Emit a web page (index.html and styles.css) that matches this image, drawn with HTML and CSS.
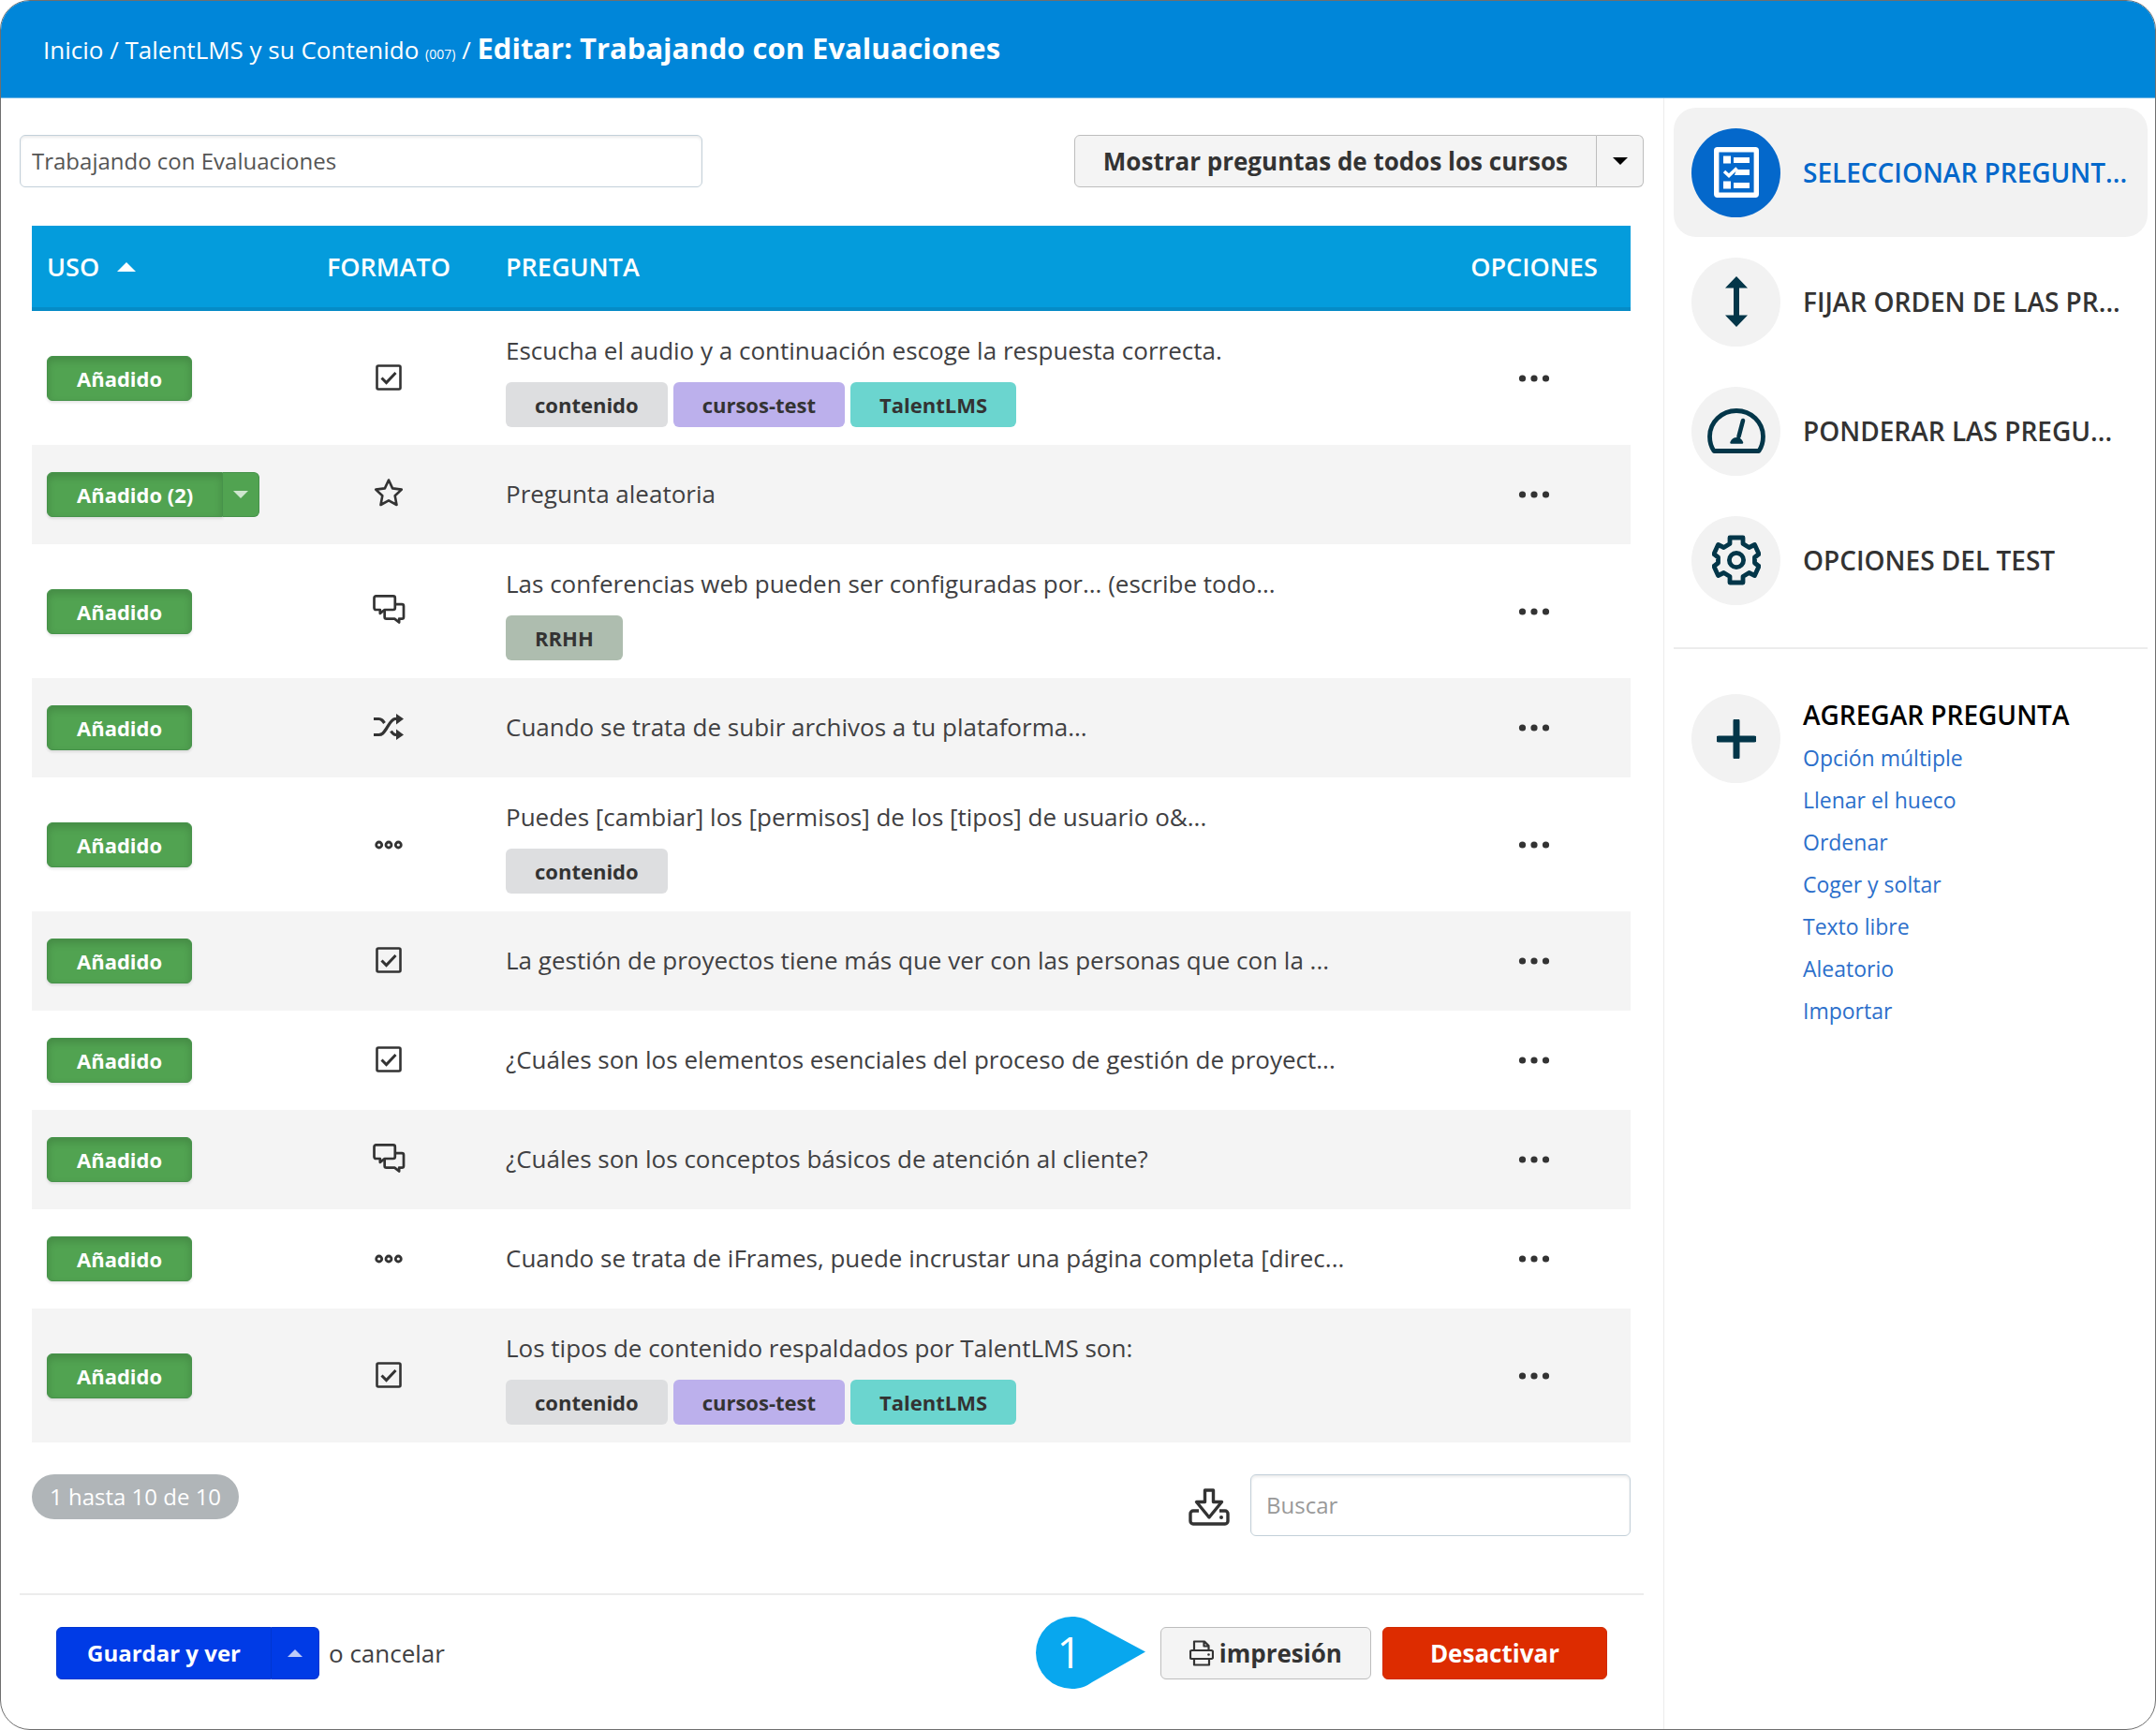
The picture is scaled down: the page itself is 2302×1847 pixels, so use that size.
FILE: index.html
```
<!DOCTYPE html>
<html lang="es">
<head>
<meta charset="utf-8">
<meta name="viewport" content="width=device-width, initial-scale=1">
<title>Editar: Trabajando con Evaluaciones</title>
<link rel="stylesheet" href="styles.css">
</head>
<body>
<svg class="sprite" aria-hidden="true">
  <symbol id="i-check" viewBox="0 0 28 28"><rect x="1.5" y="1.5" width="25" height="25" rx="1.5" fill="none" stroke="currentColor" stroke-width="2.6"/><path d="M6.5 14.5l5 5L21.500 9" fill="none" stroke="currentColor" stroke-width="3"/></symbol>
  <symbol id="i-star" viewBox="0 0 32 32"><path d="M16 2.500l4.100 8.900 9.700 1.200-7.100 6.700 1.800 9.700L16 24.300 7.500 29l1.800-9.700-7.100-6.700 9.700-1.200z" fill="none" stroke="currentColor" stroke-width="2.600" stroke-linejoin="round"/></symbol>
  <symbol id="i-chat" viewBox="0 0 36 32"><path d="M3.500 1.500h19a2 2 0 0 1 2 2v11a2 2 0 0 1-2 2H13l-5 4v-4H3.500a2 2 0 0 1-2-2v-11a2 2 0 0 1 2-2z" fill="none" stroke="currentColor" stroke-width="2.800" stroke-linejoin="round"/><path d="M24.500 10.500H32a2 2 0 0 1 2 2v12a2 2 0 0 1-2 2h-3v4l-5-4h-9a2 2 0 0 1-2-2v-8" fill="none" stroke="currentColor" stroke-width="2.800" stroke-linejoin="round"/></symbol>
  <symbol id="i-shuffle" viewBox="0 0 32 28"><path d="M0 5.500h5.500c3 0 4 1.500 6 4.500M0 22.500h5.500c3.500 0 5-2 8-6.500s5-9.500 9-10.500h3M18.500 18.500c1.500 2.500 3 4 5 4h2" fill="none" stroke="currentColor" stroke-width="3.200"/><path d="M24 0l8 5.500-8 6zM24 16.500l8 6-8 5.500z" fill="currentColor"/></symbol>
  <symbol id="i-gap" viewBox="0 0 30 10"><g fill="none" stroke="currentColor" stroke-width="2.800"><circle cx="4.700" cy="5" r="3"/><circle cx="15" cy="5" r="3"/><circle cx="25.300" cy="5" r="3"/></g></symbol>
  <symbol id="i-dots" viewBox="0 0 34 8"><g fill="currentColor"><circle cx="4.500" cy="4" r="3.600"/><circle cx="17" cy="4" r="3.600"/><circle cx="29.500" cy="4" r="3.600"/></g></symbol>
</svg>

<div class="app">
  <header class="topbar">
    <nav class="crumbs" aria-label="Ruta">
      <a href="#">Inicio</a> / <a href="#">TalentLMS y su Contenido <small>(007)</small></a> / <h1>Editar: Trabajando con Evaluaciones</h1>
    </nav>
  </header>

  <div class="columns">
    <main class="main">
      <div class="toolbar">
        <input class="field name-field" type="text" aria-label="Nombre del test" value="Trabajando con Evaluaciones">
        <div class="split">
          <button class="btn btn-light btn-filter" type="button">Mostrar preguntas de todos los cursos</button>
          <button class="btn btn-light toggle" type="button" aria-label="Más filtros"><span class="caret"></span></button>
        </div>
      </div>

      <div class="grid-wrap">
        <table class="questions">
          <colgroup><col class="c-use"><col class="c-format"><col><col class="c-options"></colgroup>
          <thead>
            <tr><th>USO <span class="caret up sort"></span></th><th class="center">FORMATO</th><th>PREGUNTA</th><th class="center">OPCIONES</th></tr>
          </thead>
          <tbody>
            <tr class="tagged">
              <td><button class="btn-use" type="button">Añadido</button></td>
              <td class="center"><svg class="ic ic-check"><use href="#i-check"/></svg></td>
              <td><p>Escucha el audio y a continuación escoge la respuesta correcta.</p><div class="tags"><span class="tag">contenido</span><span class="tag violet">cursos-test</span><span class="tag teal">TalentLMS</span></div></td>
              <td class="center"><button class="more" type="button" aria-label="Opciones"><svg class="ic-dots"><use href="#i-dots"/></svg></button></td>
            </tr>
            <tr>
              <td><div class="split"><button class="btn-use" type="button">Añadido (2)</button><button class="btn-use toggle" type="button" aria-label="Cantidad"><span class="caret"></span></button></div></td>
              <td class="center"><svg class="ic ic-star"><use href="#i-star"/></svg></td>
              <td><p>Pregunta aleatoria</p></td>
              <td class="center"><button class="more" type="button" aria-label="Opciones"><svg class="ic-dots"><use href="#i-dots"/></svg></button></td>
            </tr>
            <tr class="tagged">
              <td><button class="btn-use" type="button">Añadido</button></td>
              <td class="center"><svg class="ic ic-chat"><use href="#i-chat"/></svg></td>
              <td><p>Las conferencias web pueden ser configuradas por... (escribe todo...</p><div class="tags"><span class="tag sage">RRHH</span></div></td>
              <td class="center"><button class="more" type="button" aria-label="Opciones"><svg class="ic-dots"><use href="#i-dots"/></svg></button></td>
            </tr>
            <tr>
              <td><button class="btn-use" type="button">Añadido</button></td>
              <td class="center"><svg class="ic ic-shuffle"><use href="#i-shuffle"/></svg></td>
              <td><p>Cuando se trata de subir archivos a tu plataforma...</p></td>
              <td class="center"><button class="more" type="button" aria-label="Opciones"><svg class="ic-dots"><use href="#i-dots"/></svg></button></td>
            </tr>
            <tr class="tagged">
              <td><button class="btn-use" type="button">Añadido</button></td>
              <td class="center"><svg class="ic ic-gap"><use href="#i-gap"/></svg></td>
              <td><p>Puedes [cambiar] los [permisos] de los [tipos] de usuario o&amp;...</p><div class="tags"><span class="tag">contenido</span></div></td>
              <td class="center"><button class="more" type="button" aria-label="Opciones"><svg class="ic-dots"><use href="#i-dots"/></svg></button></td>
            </tr>
            <tr>
              <td><button class="btn-use" type="button">Añadido</button></td>
              <td class="center"><svg class="ic ic-check"><use href="#i-check"/></svg></td>
              <td><p>La gestión de proyectos tiene más que ver con las personas que con la ...</p></td>
              <td class="center"><button class="more" type="button" aria-label="Opciones"><svg class="ic-dots"><use href="#i-dots"/></svg></button></td>
            </tr>
            <tr>
              <td><button class="btn-use" type="button">Añadido</button></td>
              <td class="center"><svg class="ic ic-check"><use href="#i-check"/></svg></td>
              <td><p>¿Cuáles son los elementos esenciales del proceso de gestión de proyect...</p></td>
              <td class="center"><button class="more" type="button" aria-label="Opciones"><svg class="ic-dots"><use href="#i-dots"/></svg></button></td>
            </tr>
            <tr>
              <td><button class="btn-use" type="button">Añadido</button></td>
              <td class="center"><svg class="ic ic-chat"><use href="#i-chat"/></svg></td>
              <td><p>¿Cuáles son los conceptos básicos de atención al cliente?</p></td>
              <td class="center"><button class="more" type="button" aria-label="Opciones"><svg class="ic-dots"><use href="#i-dots"/></svg></button></td>
            </tr>
            <tr>
              <td><button class="btn-use" type="button">Añadido</button></td>
              <td class="center"><svg class="ic ic-gap"><use href="#i-gap"/></svg></td>
              <td><p>Cuando se trata de iFrames, puede incrustar una página completa [direc...</p></td>
              <td class="center"><button class="more" type="button" aria-label="Opciones"><svg class="ic-dots"><use href="#i-dots"/></svg></button></td>
            </tr>
            <tr class="tagged">
              <td><button class="btn-use" type="button">Añadido</button></td>
              <td class="center"><svg class="ic ic-check"><use href="#i-check"/></svg></td>
              <td><p>Los tipos de contenido respaldados por TalentLMS son:</p><div class="tags"><span class="tag">contenido</span><span class="tag violet">cursos-test</span><span class="tag teal">TalentLMS</span></div></td>
              <td class="center"><button class="more" type="button" aria-label="Opciones"><svg class="ic-dots"><use href="#i-dots"/></svg></button></td>
            </tr>
          </tbody>
        </table>

        <div class="table-foot">
          <span class="count">1 hasta 10 de 10</span>
          <div class="search">
            <button class="more" type="button" aria-label="Descargar"><svg class="ic-download" viewBox="0 0 44 40"><path d="M11 24H5a3 3 0 0 0-3 3v8a3 3 0 0 0 3 3h34a3 3 0 0 0 3-3v-8a3 3 0 0 0-3-3h-6" fill="none" stroke="currentColor" stroke-width="3.400"/><path d="M17.500 2h9v12.500h9L22 31 8.500 14.500h9z" fill="none" stroke="currentColor" stroke-width="3.400" stroke-linejoin="round"/><circle cx="35" cy="31" r="2" fill="currentColor"/></svg></button>
            <input class="field search-field" type="text" placeholder="Buscar" aria-label="Buscar">
          </div>
        </div>
      </div>

      <footer class="actions">
        <div class="actions-left">
          <div class="split">
            <button class="btn btn-primary" type="submit">Guardar y ver</button>
            <button class="btn btn-primary toggle" type="button" aria-label="Más acciones"><span class="caret up"></span></button>
          </div>
          <span>o <a href="#">cancelar</a></span>
        </div>
        <div class="actions-right">
          <div class="callout"><svg viewBox="0 0 117 77" aria-hidden="true"><path d="M38.500 0C47 0 54 2.500 60 7L117 37.500 60 70C54 74.500 47 77 38.500 77a38.500 38.500 0 0 1 0-77z" fill="#08a7ee"/></svg><span>1</span></div>
          <button class="btn btn-light btn-print" type="button"><svg class="ic-print" viewBox="0 0 26 28"><g fill="none" stroke="currentColor" stroke-width="2.200" stroke-linejoin="round"><path d="M5 11V1.500h11L20.500 6v5M5 20H2.500A1.500 1.500 0 0 1 1 18.500v-6A1.500 1.500 0 0 1 2.500 11h21a1.500 1.500 0 0 1 1.500 1.500v6a1.500 1.500 0 0 1-1.500 1.500H21M5 20h16v6.500H5zM15.500 1.500v5h5"/></g><circle cx="20.500" cy="15.500" r="1.300" fill="currentColor"/></svg>impresión</button>
          <button class="btn btn-danger" type="button">Desactivar</button>
        </div>
      </footer>
    </main>

    <aside class="side">
      <nav class="steps" aria-label="Secciones del test">
        <a class="step active" href="#"><span class="disc"><svg viewBox="0 0 48 54" class="glyph"><rect x="2.700" y="2.700" width="42.600" height="48.600" rx="1" fill="none" stroke="currentColor" stroke-width="5.400"/><path d="M10 9.500h8v8h-8zM21 11h17v6H21zM24 24h14v6H22zM21 38h17v6H21zM10 36.500h8v8h-8z" fill="currentColor"/><path d="M11 26l5 4.500 8.500-8" fill="none" stroke="currentColor" stroke-width="3.500"/></svg></span><span class="label">SELECCIONAR PREGUNT...</span></a>
        <a class="step" href="#"><span class="disc"><svg viewBox="0 0 48 54" class="glyph"><path d="M24 0l12 12.500h-9v29h9L24 54 12 41.500h9v-29h-9z" fill="currentColor"/></svg></span><span class="label">FIJAR ORDEN DE LAS PR...</span></a>
        <a class="step" href="#"><span class="disc"><svg viewBox="0 0 62 48" class="glyph wide"><path d="M7 45.500C4 41 2.500 35 2.500 30a28.500 27.500 0 0 1 57 0c0 5-1.500 11-4.500 15.500z" fill="none" stroke="currentColor" stroke-width="4.800" stroke-linejoin="round"/><path d="M38 13L33.500 30" stroke="currentColor" stroke-width="4.600" stroke-linecap="round"/><path d="M25.500 36.500a6.500 8 0 0 1 11.500 0z" fill="currentColor" stroke="currentColor" stroke-width="2.500" stroke-linejoin="round"/></svg></span><span class="label">PONDERAR LAS PREGU...</span></a>
        <a class="step" href="#"><span class="disc"><svg viewBox="0 0 52 54" class="glyph gear"><g fill="none" stroke="currentColor" stroke-width="4.800" stroke-linejoin="round"><path d="M19 3h14v6.500l6.500 4L45.500 10.500l4.500 10-4.500 3.500v6l4.500 3.500-4.500 10-6-3L33 44.500V51H19v-6.500l-6.500-4-6 3L2 33.500 6.500 30v-6L2 20.500l4.500-10 6 3 6.500-4z"/><circle cx="26" cy="27" r="7.600"/></g></svg></span><span class="label">OPCIONES DEL TEST</span></a>
      </nav>
      <section class="add">
        <span class="disc"><svg viewBox="0 0 42 42" class="glyph plus"><path d="M21 2v38M2 21h38" stroke="currentColor" stroke-width="7" stroke-linecap="round"/></svg></span>
        <div>
          <h2>AGREGAR PREGUNTA</h2>
          <ul>
            <li><a href="#">Opción múltiple</a></li>
            <li><a href="#">Llenar el hueco</a></li>
            <li><a href="#">Ordenar</a></li>
            <li><a href="#">Coger y soltar</a></li>
            <li><a href="#">Texto libre</a></li>
            <li><a href="#">Aleatorio</a></li>
            <li><a href="#">Importar</a></li>
          </ul>
        </div>
      </section>
    </aside>
  </div>
</div>
</body>
</html>
```
FILE: styles.css
```
*, *::before, *::after { box-sizing: border-box; }

body {
  margin: 0;
  background: #fff;
  color: #404042;
  font-family: "Open Sans", "Noto Sans", sans-serif;
  font-size: 26px;
  line-height: 36px;
}

h1, h2, p, ul { margin: 0; padding: 0; }
ul { list-style: none; }
a { color: inherit; text-decoration: none; }
button, input { font: inherit; color: inherit; margin: 0; }
button { cursor: pointer; }
svg { display: block; }
.sprite { position: absolute; width: 0; height: 0; }

.app {
  display: flex;
  flex-direction: column;
  min-height: 100vh;
  border: 1px solid #6f6f6f;
  border-radius: 32px;
  overflow: hidden;
}

/* Top bar */
.topbar {
  height: 104px;
  padding: 30px 45px;
  background: #0086d9;
  border-bottom: 1px solid #6db8e8;
  color: #fff;
}
.crumbs { white-space: nowrap; line-height: 40px; }
.crumbs small { font-size: 14px; }
.crumbs h1 { display: inline; font-size: 31px; font-weight: 700; }

.columns {
  display: grid;
  grid-template-columns: minmax(0, 1fr) 525px;
  flex: 1;
}
.main { padding: 39px 21px 39px 20px; }

/* Shared controls */
.toolbar { display: flex; justify-content: space-between; align-items: center; }
.field {
  border: 1px solid #c3d0d9;
  border-radius: 6px;
  background: #fff;
  box-shadow: inset 0 2px 3px rgba(0, 0, 0, .08);
  color: #555;
  font-size: 24px;
  outline: 0;
}
.field::placeholder { color: #999; opacity: 1; }
.name-field { width: 729px; height: 56px; padding: 0 12px 2px; }

.split { display: flex; }
.split > :first-child { border-top-right-radius: 0; border-bottom-right-radius: 0; }
.split > :last-child { border-top-left-radius: 0; border-bottom-left-radius: 0; border-left-width: 0; }

.btn {
  display: inline-flex;
  align-items: center;
  justify-content: center;
  height: 56px;
  padding: 0 32px;
  border: 1px solid transparent;
  border-radius: 6px;
  font-weight: 700;
  white-space: nowrap;
}
.btn-light { background: #f4f4f4; border-color: #bdbdbd; color: #333; }
.btn-filter, .btn-print { padding: 0 30px; }
.btn-primary { background: #003be6; border-color: #0035d0; color: #fff; font-size: 24px; }
.btn-primary .caret { color: #bccbf8; }
.btn-danger { padding: 0 50px; background: #dd2c00; border-color: #d02a00; color: #fff; }
.btn.toggle { width: 50px; padding: 0; }

.caret {
  display: inline-block;
  border: 8px solid transparent;
  border-top-color: currentColor;
  border-bottom: 0;
}
.caret.up { border-top: 0; border-bottom: 8px solid currentColor; }
.btn-light .caret { color: #000; }

/* Question table */
.grid-wrap { padding: 41px 14px 0 13px; }
.questions { width: 100%; table-layout: fixed; border-collapse: separate; border-spacing: 0; }
.c-use { width: 290px; }
.c-format { width: 182px; }
.c-options { width: 206px; }

th {
  height: 91px;
  padding: 0 34px;
  background: #049cdc;
  border-bottom: 4px solid #058bc6;
  color: #fff;
  font-size: 27px;
  font-weight: 600;
  text-align: left;
  white-space: nowrap;
}
td { height: 106px; padding: 0 34px 3px; vertical-align: middle; }
th:first-child { padding: 0 16px; }
td:first-child { padding: 0 16px; }
th.center, td.center { padding: 0; text-align: center; }
td.center:last-child { padding-bottom: 6px; }
.tagged td { height: 143px; }
.tagged td:nth-child(3) { padding-top: 8px; }
tbody tr:nth-child(even) { background: #f4f4f4; }
.sort { margin: 0 0 5px 12px; border-width: 10px; }
.sort.caret.up { border-bottom-width: 10px; }

.btn-use {
  height: 48px;
  padding: 0 31px;
  border: 1px solid #46924a;
  border-radius: 6px;
  background: #51a351;
  box-shadow: inset 0 4px 8px rgba(0, 0, 0, .15), 0 2px 3px rgba(0, 0, 0, .1);
  color: #fff;
  font-size: 22px;
  font-weight: 700;
  line-height: 30px;
  vertical-align: middle;
}
.btn-use.toggle { display: flex; align-items: center; width: 39px; padding: 0 11px; box-shadow: none; color: #cfe6cf; }

.tags { display: flex; gap: 6px; margin-top: 16px; }
.tag {
  padding: 0 31px;
  border-radius: 6px;
  background: #dddee0;
  color: #333;
  font-size: 22px;
  font-weight: 700;
  line-height: 48px;
}
.violet { background: #bcb0ec; }
.teal { background: #6bd5cf; }
.sage { background: #aebdaf; }

.ic { display: inline-block; vertical-align: middle; margin-bottom: 6px; color: #333; }
.ic-check { width: 28px; height: 28px; }
.ic-star { width: 32px; height: 32px; }
.ic-chat { width: 35px; height: 31px; }
.ic-shuffle { width: 32px; height: 28px; }
.ic-gap { width: 30px; height: 10px; }
.ic-dots { width: 34px; height: 8px; }
.more { padding: 0; border: 0; background: none; color: #333; vertical-align: middle; }

.table-foot { display: flex; justify-content: space-between; margin-top: 34px; }
.count {
  align-self: flex-start;
  padding: 0 19px;
  border-radius: 24px;
  background: #b0b5b8;
  color: #fff;
  font-size: 24px;
  line-height: 48px;
}
.search { display: flex; align-items: center; gap: 22px; }
.search-field { width: 406px; height: 66px; padding: 0 16px 2px; }
.ic-download { width: 44px; height: 40px; }
.search .more { padding-top: 4px; }

/* Footer actions */
.actions {
  display: flex;
  justify-content: space-between;
  align-items: center;
  margin-top: 61px;
  padding: 23px 39px 0;
  border-top: 2px solid #ececec;
}
.actions-left, .actions-right { display: flex; align-items: center; gap: 12px; }
.actions-left { gap: 10px; }
.actions-left .toggle { width: 51px; }
.btn-print { gap: 6px; }
.ic-print { width: 26px; height: 28px; }
.callout { position: relative; width: 117px; height: 77px; margin-right: 4px; }
.callout svg { width: 117px; height: 77px; }
.callout span {
  position: absolute;
  inset: 0 45px 0 0;
  color: #fff;
  font-size: 46px;
  line-height: 74px;
  text-align: center;
}

/* Sidebar */
.side { padding: 10px 8px 0 10px; border-left: 1px solid #ececec; }
.step {
  display: flex;
  align-items: center;
  gap: 24px;
  height: 138px;
  padding: 0 19px;
  border-radius: 24px;
  color: #333;
  font-size: 28px;
  font-weight: 600;
  white-space: nowrap;
}
.step.active { background: #f2f2f2; color: #0468cb; }
.disc {
  display: flex;
  align-items: center;
  justify-content: center;
  flex: none;
  width: 95px;
  height: 95px;
  border-radius: 50%;
  background: #f2f2f2;
  color: #033649;
}
.active .disc { background: #0468cb; color: #fff; }
.glyph { width: 48px; height: 54px; }
.glyph.wide { width: 62px; height: 48px; }
.glyph.gear { width: 52px; height: 54px; }
.glyph.plus { width: 42px; height: 42px; }
.add {
  display: flex;
  gap: 24px;
  margin-top: 24px;
  padding: 48px 19px;
  border-top: 2px solid #ececec;
}
.add h2 { margin-top: 4px; color: #000; font-size: 28px; font-weight: 600; line-height: 36px; }
.add ul { margin-top: 6px; }
.add li { color: #2c6fcb; font-size: 23px; line-height: 45px; }
```
